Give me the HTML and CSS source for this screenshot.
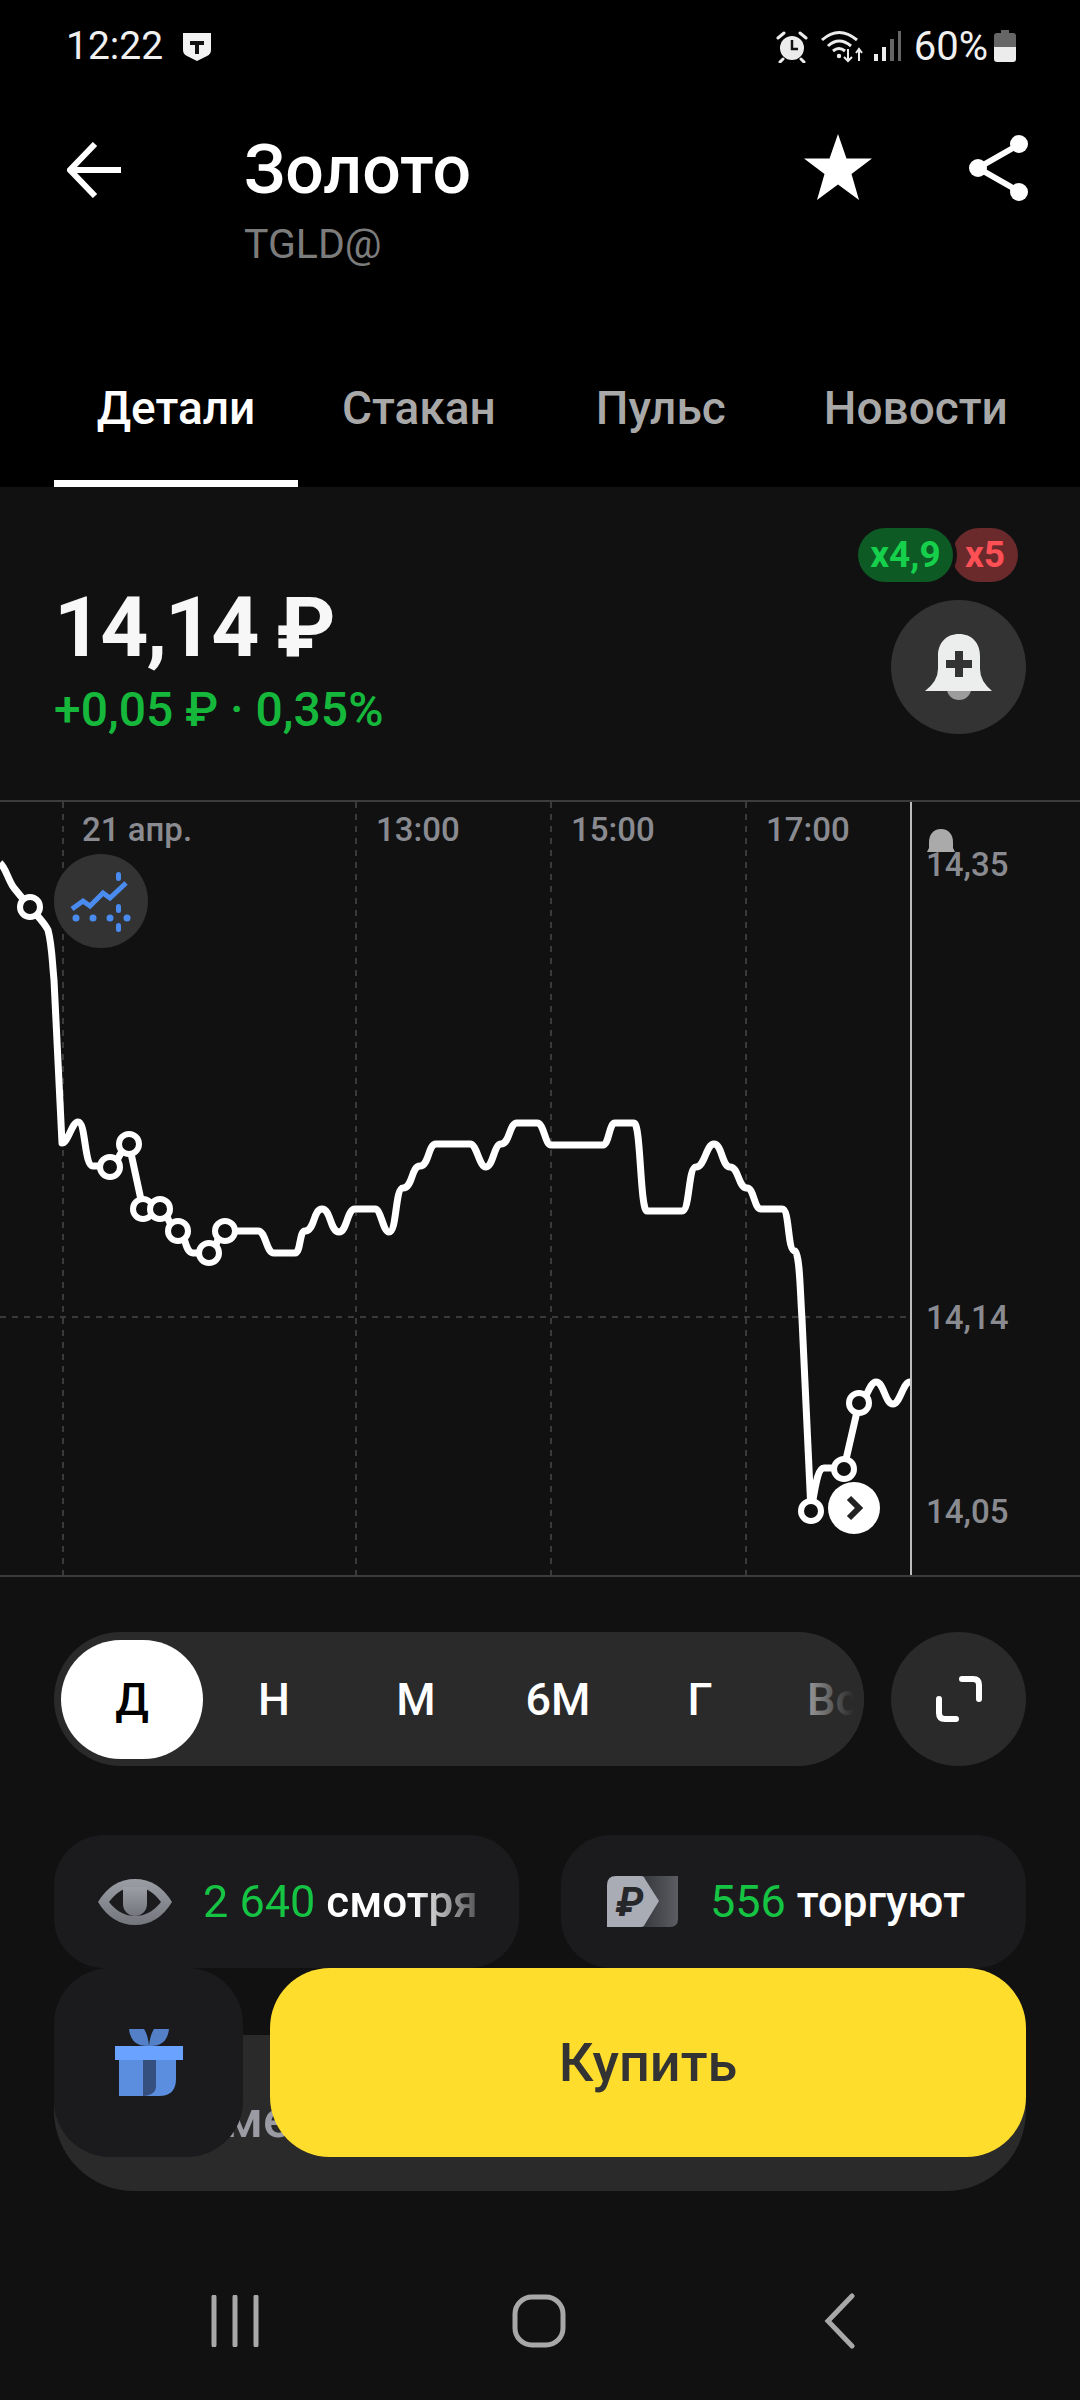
FILE: index.html
```html
<!DOCTYPE html>
<html lang="ru">
  <head>
    <meta charset="UTF-8" />
    <meta name="viewport" content="width=device-width, initial-scale=1.0" />
    <title>Золото</title>
    <link rel="stylesheet" href="styles.css">
  </head>
  <body>
    <div class="top">
      <div class="status">
        <div class="status-left">
          <span class="status-time">12:22</span>
          <svg class="icon-shield" width="30" height="30" viewBox="0 0 30 30">
            <path d="M1 1h28v17q0 4-4 6l-10 5-10-5q-4-2-4-6z" fill="#f2f2f2" />
            <path d="M8 9h14v4h-5v9h-4v-9H8z" fill="#111" />
          </svg>
        </div>
        <div class="status-right">
          <svg width="34" height="34" viewBox="0 0 34 34">
            <circle cx="17" cy="19" r="12" fill="#ececec" />
            <path d="M17 11v9h6" fill="none" stroke="#111" stroke-width="2.5" />
            <path d="M3 9l6-5M31 9l-6-5M8 30l-3 3M26 30l3 3" stroke="#ececec" stroke-width="3" stroke-linecap="round" />
          </svg>
          <svg class="icon-wifi" width="44" height="34" viewBox="0 0 44 34">
            <g fill="none" stroke="#ececec" stroke-width="3">
              <path d="M1 11Q18-4 36 11" />
              <path d="M7 17Q18 7 30 17" />
              <path d="M12 22Q18 17 24 22" />
            </g>
            <circle cx="18" cy="27" r="2.2" fill="#ececec" />
            <path d="M27 20v12m-4-4l4 4 4-4M38 32V20m-3 4l3-4 3 4" fill="none" stroke="#ececec" stroke-width="2" />
          </svg>
          <svg class="icon-signal" width="28" height="32" viewBox="0 0 28 32">
            <rect x="0" y="24" width="4" height="7" fill="#ececec" />
            <rect x="8" y="17" width="4" height="14" fill="#ececec" />
            <rect x="16" y="9" width="4" height="22" fill="#666" />
            <rect x="24" y="1" width="3" height="30" fill="#666" />
          </svg>
          <span class="status-batt">60%</span>
          <svg width="22" height="32" viewBox="0 0 22 32">
            <path d="M7 0h8v3h4q3 0 3 3v11H0V6q0-3 3-3h4z" fill="#666" />
            <path d="M0 17h22v12q0 3-3 3H3q-3 0-3-3z" fill="#ececec" />
          </svg>
        </div>
      </div>

      <div class="head">
        <svg class="head-back" width="56" height="56" viewBox="0 0 56 56">
          <path d="M54 28H4M28 2L3 28l25 26" fill="none" stroke="#fff" stroke-width="6" />
        </svg>
        <div class="head-title">
          <div class="title">Золото</div>
          <div class="ticker">TGLD@</div>
        </div>
        <svg class="head-star" width="68" height="66" viewBox="0 0 68 66">
          <path d="M34 0l8.500 24.500H68L47.500 40l7.500 26-21-15.500L13 66l7.500-26L0 24.500h25.500z" fill="#fff" />
        </svg>
        <svg width="62" height="68" viewBox="0 0 62 68">
          <path d="M52 10L10 34l42 24" fill="none" stroke="#fff" stroke-width="6" />
          <circle cx="51" cy="10" r="9" fill="#fff" />
          <circle cx="10" cy="34" r="9" fill="#fff" />
          <circle cx="51" cy="58" r="9" fill="#fff" />
        </svg>
      </div>

      <div class="tabs">
        <div class="tab tab-active">Детали</div>
        <div class="tab tab-2">Стакан</div>
        <div class="tab tab-3">Пульс</div>
        <div class="tab tab-4">Новости</div>
      </div>
    </div>

    <div class="price-box">
      <div class="price-left">
        <div class="price">14,14 ₽</div>
        <div class="change">+0,05 ₽ · 0,35%</div>
      </div>
      <div class="price-right">
        <div class="pills">
          <span class="pill pill-green">x4,9</span>
          <span class="pill pill-red">x5</span>
        </div>
        <div class="round-btn">
          <svg width="68" height="68" viewBox="0 0 68 68">
            <path d="M22 56a12 11 0 0 0 24 0z" fill="#9c9c9c" />
            <path d="M34 1c-13 0-21 9-21 22v13q0 12-13 22h67q-12-10-12-22V23C55 10 47 1 34 1z" fill="#eceded" />
            <path d="M30 18h8v9h9v8h-9v9h-8v-9h-9v-8h9z" fill="#333" />
          </svg>
        </div>
      </div>
    </div>

    <svg class="chart" width="1080" height="777" viewBox="0 800 1080 777">
      <path class="chart-border" d="M0 801h1080M0 1576h1080" />
      <path class="grid" d="M63 802v773M356 802v773M551 802v773M746 802v773M0 1317h910" />
      <path class="chart-edge" d="M911 802v773" />

      <text class="axis" x="82" y="841">21 апр.</text>
      <text class="axis" x="376" y="841">13:00</text>
      <text class="axis" x="571" y="841">15:00</text>
      <text class="axis" x="766" y="841">17:00</text>
      <text class="axis" x="926" y="876">14,35</text>
      <text class="axis" x="926" y="1329">14,14</text>
      <text class="axis" x="926" y="1523">14,05</text>

      <path d="M930 850v-6c0-7 4-13 12-13s12 6 12 13v6l2 4h-28z" fill="#aaa" transform="translate(-1 -2)" />

      <circle cx="101" cy="901" r="47" fill="#333" />
      <path d="M72 909l11-8 7 5 13-13 7 5 16-15" fill="none" stroke="#4a8bf0" stroke-width="5" />
      <g fill="#4a8bf0">
        <circle cx="76" cy="918" r="3.500" />
        <circle cx="93" cy="918" r="3.500" />
        <circle cx="110" cy="918" r="3.500" />
        <circle cx="127" cy="918" r="3.500" />
        <rect x="116" y="872" width="5" height="9" rx="2.500" />
        <rect x="116" y="904" width="5" height="9" rx="2.500" />
        <rect x="116" y="923" width="5" height="9" rx="2.500" />
      </g>

      <path class="line" d="M0 863C6 868 8 880 14 888C22 898 24 900 30 907C38 917 44 922 48 930C52 945 52 960 54 980L62 1143C68 1143 72 1122 78 1122C86 1122 84 1166 93 1166H110C118 1166 122 1144 129 1144L143 1209H160C167 1209 170 1231 178 1231C186 1231 184 1253 193 1253H209C217 1253 217 1231 225 1231H258C266 1231 266 1253 274 1253H295C301 1253 299 1231 305 1231C315 1231 313 1209 322 1209C331 1209 330 1232 339 1232C347 1232 347 1209 355 1209H375C381 1209 383 1232 389 1232C397 1232 395 1188 403 1188C413 1188 411 1166 420 1166C429 1166 428 1144 436 1144H470C477 1144 479 1167 486 1167C493 1167 494 1144 501 1144C510 1144 509 1123 517 1123H537C544 1123 545 1145 551 1145H603C609 1145 609 1123 615 1123H634C641 1123 640 1211 647 1211H682C690 1211 688 1167 696 1167C705 1167 706 1144 714 1144C722 1144 722 1167 730 1167C739 1167 738 1188 747 1188C754 1188 754 1209 761 1209H782C790 1209 787 1251 795 1251C800 1256 800 1290 802 1319L811 1511C815 1490 817 1468 824 1468H844L859 1403C866 1403 869 1382 876 1382C884 1382 885 1404 893 1404C900 1404 903 1382 910 1382" />

      <g class="dots">
        <circle cx="30" cy="907" r="10" />
        <circle cx="110" cy="1167" r="10" />
        <circle cx="129" cy="1144" r="10" />
        <circle cx="143" cy="1209" r="10" />
        <circle cx="160" cy="1209" r="10" />
        <circle cx="178" cy="1231" r="10" />
        <circle cx="209" cy="1253" r="10" />
        <circle cx="225" cy="1231" r="10" />
        <circle cx="811" cy="1511" r="10" />
        <circle cx="844" cy="1469" r="10" />
        <circle cx="859" cy="1403" r="10" />
      </g>

      <circle cx="854" cy="1508" r="26" fill="#fff" />
      <path d="M849 1498l10 10-10 10" fill="none" stroke="#222" stroke-width="6" />
    </svg>

    <div class="periods">
      <div class="period-pill">
        <div class="period period-active">Д</div>
        <div class="period">Н</div>
        <div class="period">М</div>
        <div class="period">6М</div>
        <div class="period">Г</div>
        <div class="period period-last">Вс</div>
      </div>
      <div class="round-btn">
        <svg width="46" height="46" viewBox="0 0 46 46">
          <path d="M26 3h11q6 0 6 6v14M3 23v14q0 6 6 6h11" fill="none" stroke="#fff" stroke-width="6" stroke-linecap="round" />
        </svg>
      </div>
    </div>

    <div class="cards">
      <div class="card">
        <svg class="card-eye" width="74" height="46" viewBox="0 0 74 46">
          <defs>
            <linearGradient id="eyeGrad" x1="0" y1="0" x2="0" y2="1">
              <stop offset="0" stop-color="#9b9ea5" />
              <stop offset="1" stop-color="#74767c" />
            </linearGradient>
          </defs>
          <path d="M0 23Q14 0 37 0T74 23Q60 46 37 46T0 23z" fill="url(#eyeGrad)" />
          <path d="M11 23Q22 8 37 8T63 23Q52 37 37 37T11 23z" fill="#1b1b1e" />
          <path d="M25 8h24v17a12 12 0 0 1-24 0z" fill="url(#eyeGrad)" />
        </svg>
        <div class="card-text card-fade">
          <span class="green">2 640</span> смотря
        </div>
      </div>
      <div class="card">
        <svg class="card-tag" width="71" height="51" viewBox="0 0 71 51">
          <defs>
            <linearGradient id="tagGrad" x1="0" y1="0" x2="1" y2="0">
              <stop offset="0" stop-color="#2c2d31" />
              <stop offset="1" stop-color="#5b5d63" />
            </linearGradient>
          </defs>
          <path d="M25 0h46v43q0 8-8 8H25z" fill="url(#tagGrad)" />
          <path d="M9 0h25q3 0 4 3l14 22-14 23q-1 3-4 3H0V9q0-9 9-9z" fill="#a9acb4" />
          <text class="tag-rub" x="9" y="40">₽</text>
        </svg>
        <div class="card-text">
          <span class="green">556</span> торгуют
        </div>
      </div>
    </div>

    <div class="bottom">
      <div class="under-bar"><span class="under-text">ме</span></div>
      <div class="actions">
        <div class="gift">
          <svg width="68" height="68" viewBox="0 0 68 68">
            <path d="M14 0h15q4 6 5 17Q16 18 14 0zM54 0H39q-4 6-5 17Q52 18 54 0z" fill="#5480c8" />
            <rect x="0" y="17" width="68" height="14" fill="#6aa3ff" />
            <path d="M4 31h57v19q0 17-17 17H4z" fill="#5b8ede" />
            <path d="M28 31h13v26q0 9-13 10z" fill="#35507f" />
          </svg>
        </div>
        <div class="buy">Купить</div>
      </div>
    </div>

    <div class="sysnav">
      <svg width="48" height="52" viewBox="0 0 48 52">
        <path d="M3 2v48M24 2v48M45 2v48" stroke="#a8a8a8" stroke-width="5" stroke-linecap="round" />
      </svg>
      <svg class="sysnav-home" width="54" height="54" viewBox="0 0 54 54">
        <rect x="3" y="3" width="48" height="48" rx="17" fill="none" stroke="#a8a8a8" stroke-width="5" />
      </svg>
      <svg width="32" height="56" viewBox="0 0 32 56">
        <path d="M28 3L4 28l24 25" fill="none" stroke="#a8a8a8" stroke-width="5" stroke-linecap="round" />
      </svg>
    </div>
  </body>
</html>
```

FILE: styles.css
```css
body {
  font-family: Roboto, "Noto Sans", sans-serif;
  margin: 0;
  width: 1080px;
  height: 2400px;
  overflow: hidden;
  background-color: #111112;
  color: #ffffff;
}
svg {
  display: block;
  flex: none;
}

/* black top part */
.top {
  background-color: #000000;
  height: 487px;
  display: flex;
  flex-direction: column;
}
.status {
  height: 92px;
  display: flex;
  justify-content: space-between;
  align-items: center;
  padding: 0 64px 0 66px;
}
.status-left,
.status-right {
  display: flex;
  align-items: center;
}
.status-time {
  font-size: 39px;
  color: #f0f0f0;
}
.icon-shield {
  margin-left: 19px;
  margin-top: 2px;
}
.icon-wifi {
  margin-left: 12px;
}
.icon-signal {
  margin-left: 9px;
}
.status-batt {
  font-size: 40px;
  color: #f0f0f0;
  margin: 0 6px 0 12px;
}
.head {
  height: 150px;
  display: flex;
  align-items: flex-start;
  padding: 42px 50px 0 67px;
}
.head-back {
  margin-top: 8px;
}
.head-title {
  margin-left: 121px;
  flex: 1;
}
.head-star {
  margin-right: 96px;
}
.title {
  font-size: 68px;
  line-height: 72px;
  font-weight: 500;
}
.ticker {
  font-size: 41px;
  line-height: 44px;
  margin-top: 16px;
  color: #7c7c7c;
}
.tabs {
  flex: 1;
  display: flex;
  align-items: flex-start;
  padding: 0 0 0 54px;
  margin-top: 20px;
}
.tab {
  font-size: 46px;
  line-height: 50px;
  padding-top: 79px;
  color: #a8a8a8;
  font-weight: 500;
}
.tab-active {
  width: 244px;
  box-sizing: border-box;
  height: 100%;
  text-align: center;
  color: #ffffff;
  border-bottom: 7px solid #ffffff;
}
.tab-2 {
  margin-left: 44px;
}
.tab-3 {
  margin-left: 100px;
}
.tab-4 {
  margin-left: 98px;
}

/* price */
.price-box {
  height: 313px;
  box-sizing: border-box;
  display: flex;
  justify-content: space-between;
  padding: 41px 54px 0;
}
.price-left {
  padding-top: 52px;
}
.price {
  font-size: 84px;
  line-height: 96px;
  font-weight: 700;
  letter-spacing: -2px;
  color: #f7f7f7;
}
.change {
  font-size: 48px;
  line-height: 50px;
  margin-top: 9px;
  font-weight: 500;
  color: #16b83c;
}
.price-right {
  display: flex;
  flex-direction: column;
  align-items: flex-end;
}
.pills {
  display: flex;
  margin-right: 8px;
}
.pill {
  height: 54px;
  line-height: 54px;
  border-radius: 27px;
  font-size: 37px;
  font-weight: 700;
  text-align: center;
}
.pill-green {
  width: 95px;
  background-color: #0e5a25;
  color: #16d04c;
  position: relative;
  box-shadow: 0 0 0 4px #111112;
}
.pill-red {
  width: 66px;
  margin-left: -1px;
  background-color: #6a2a2c;
  color: #ff5056;
}
.round-btn {
  width: 135px;
  height: 134px;
  margin-top: 18px;
  border-radius: 50%;
  background-color: #333334;
  display: flex;
  align-items: center;
  justify-content: center;
  flex: none;
}

/* chart */
.chart {
  display: block;
}
.chart-border {
  stroke: #3c3c3d;
  stroke-width: 2;
}
.chart-edge {
  stroke: #bdbdbd;
  stroke-width: 2;
}
.grid {
  stroke: #3a3a3b;
  stroke-width: 2;
  stroke-dasharray: 6 6;
  fill: none;
}
.axis {
  font-family: Roboto, sans-serif;
  font-size: 33px;
  font-weight: 500;
  fill: #8a8b90;
}
.line {
  fill: none;
  stroke: #ffffff;
  stroke-width: 7;
  stroke-linejoin: round;
}
.dots circle {
  fill: #111112;
  stroke: #ffffff;
  stroke-width: 6;
}

/* periods */
.periods {
  display: flex;
  justify-content: space-between;
  margin: 55px 54px 0;
}
.periods .round-btn {
  margin-top: 0;
  background-color: #2a2a2b;
}
.period-pill {
  position: relative;
  width: 810px;
  height: 134px;
  box-sizing: border-box;
  padding: 8px 0 7px 7px;
  border-radius: 67px;
  background-color: #2a2a2b;
  display: flex;
  overflow: hidden;
}
.period-pill::after {
  content: "";
  position: absolute;
  top: 0;
  right: 0;
  bottom: 0;
  width: 100px;
  background: linear-gradient(to right, rgba(42, 42, 43, 0), #2a2a2b 90%);
}
.period {
  width: 142px;
  flex: none;
  font-size: 45px;
  font-weight: 500;
  display: flex;
  align-items: center;
  justify-content: center;
}
.period-active {
  background-color: #ffffff;
  color: #000000;
  border-radius: 60px;
}
.period-last {
  width: 124px;
}

/* cards */
.cards {
  display: flex;
  justify-content: space-between;
  margin: 69px 54px 0;
}
.card {
  width: 465px;
  height: 133px;
  border-radius: 50px;
  background-color: #1b1b1e;
  display: flex;
  align-items: center;
  font-size: 44px;
  font-weight: 500;
  white-space: nowrap;
}
.card-eye {
  margin-left: 44px;
}
.card-tag {
  margin-left: 46px;
}
.card-text {
  margin-left: 32px;
}
.card-fade {
  margin-left: 31px;
  -webkit-mask-image: linear-gradient(to right, #000 76%, rgba(0, 0, 0, 0.25) 100%);
  mask-image: linear-gradient(to right, #000 76%, rgba(0, 0, 0, 0.25) 100%);
}
.green {
  color: #16c443;
  font-size: 45px;
  font-weight: 400;
}
.tag-rub {
  font-family: Roboto, sans-serif;
  font-size: 40px;
  font-weight: 700;
  font-style: italic;
  fill: #26272b;
}

/* bottom actions lie over the note bar */
.bottom {
  position: relative;
  height: 223px;
  margin: 0 54px;
}
.under-bar {
  position: absolute;
  left: 0;
  right: 0;
  top: 67px;
  bottom: 0;
  border-radius: 0 0 80px 80px;
  background-color: #2a2a2b;
}
.under-text {
  position: absolute;
  left: 170px;
  top: 55px;
  font-size: 52px;
  line-height: 60px;
  font-weight: 500;
  color: #9a9ba3;
}
.actions {
  position: absolute;
  left: 0;
  right: 0;
  top: 0;
  height: 189px;
  display: flex;
  justify-content: space-between;
}
.gift {
  width: 189px;
  height: 189px;
  border-radius: 56px;
  background-color: #1b1b1e;
  display: flex;
  align-items: center;
  justify-content: center;
}
.buy {
  width: 756px;
  border-radius: 60px;
  background-color: #ffdd2d;
  color: #333333;
  font-size: 54px;
  font-weight: 500;
  display: flex;
  align-items: center;
  justify-content: center;
}

/* system nav */
.sysnav {
  display: flex;
  align-items: center;
  justify-content: space-between;
  margin-top: 102px;
  padding: 0 224px 0 211px;
}
.sysnav-home {
  margin-right: 6px;
}
```
